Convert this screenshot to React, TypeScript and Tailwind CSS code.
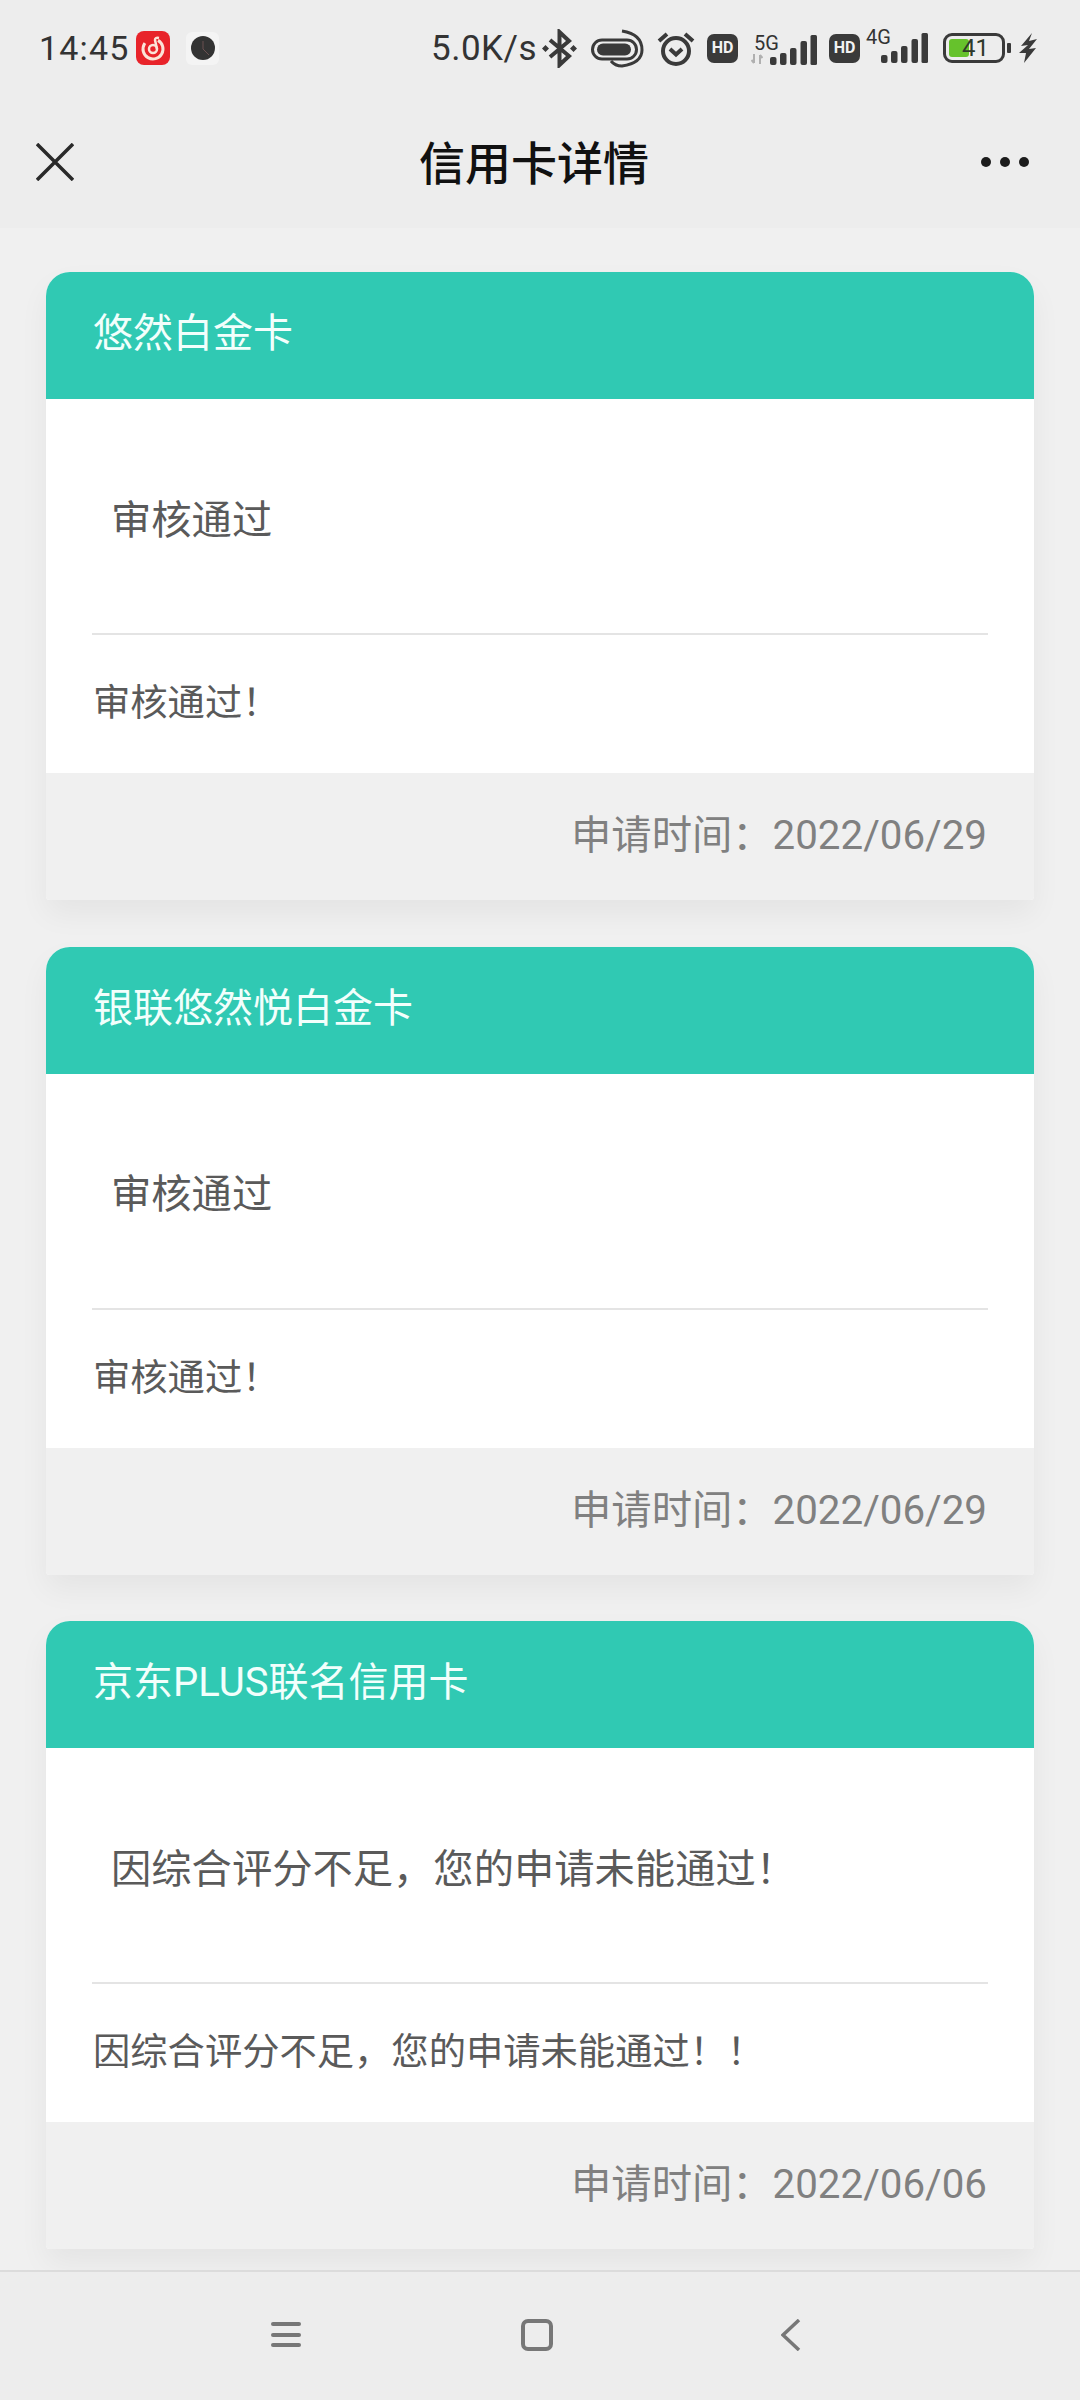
const cjk = { fontFamily: 'Roboto, "Noto Sans CJK SC", sans-serif' };

const applications = [
  { name: "悠然白金卡", status: "审核通过", remark: "审核通过！", date: "2022/06/29" },
  { name: "银联悠然悦白金卡", status: "审核通过", remark: "审核通过！", date: "2022/06/29" },
  {
    name: "京东PLUS联名信用卡",
    status: "因综合评分不足，您的申请未能通过！",
    remark: "因综合评分不足，您的申请未能通过！！",
    date: "2022/06/06",
  },
];

function Signal() {
  return (
    <svg width="47" height="30" viewBox="0 0 47 30" fill="#3a3a3a">
      <rect x="0" y="22" width="6.5" height="8" rx="2" />
      <rect x="10" y="18" width="6.5" height="12" rx="2" />
      <rect x="20" y="13" width="6.5" height="17" rx="2" />
      <rect x="30.5" y="6" width="6.5" height="24" rx="2" />
      <rect x="40.5" y="0" width="6.5" height="30" rx="1.5" />
    </svg>
  );
}

function HdBadge({ className }: { className?: string }) {
  return (
    <div className={`flex h-[29px] w-[31px] items-center justify-center rounded-[7px] bg-[#3a3a3a] text-[16px] font-bold leading-none text-[#f2f2f2] ${className ?? ""}`}>
      HD
    </div>
  );
}

function StatusBar() {
  return (
    <div className="flex h-[96px] items-center justify-between pl-[39px] pr-[43px] text-[#333333]">
      <div className="flex items-center">
        <span className="w-[97px] text-[34px] font-normal leading-none tracking-[1.2px]">14:45</span>
        <svg width="34" height="34" viewBox="0 0 34 34">
          <rect width="34" height="34" rx="8" fill="#e8232a" />
          <circle cx="17" cy="18" r="10" fill="none" stroke="#fbe3d8" strokeWidth="3" strokeDasharray="48 15" transform="rotate(-60 17 18)" />
          <circle cx="17" cy="18" r="4" fill="none" stroke="#fbe3d8" strokeWidth="2.5" />
          <path d="M21 18 L19 9 Q19 6 23 7" fill="none" stroke="#fbe3d8" strokeWidth="2.5" />
        </svg>
        <div className="ml-[16px] flex h-[33px] w-[33px] items-center justify-center rounded-[6px] bg-[#f4f4f4]">
          <svg width="24" height="24" viewBox="0 0 24 24">
            <circle cx="12" cy="12" r="12" fill="#333333" />
            <path d="M12 5 V13 L18 19" fill="none" stroke="#6b5050" strokeWidth="1" />
          </svg>
        </div>
      </div>
      <div className="flex items-center">
        <span className="w-[103px] text-[35px] leading-none tracking-[0.5px]">5.0K/s</span>
        {/* bluetooth */}
        <svg width="35" height="39" viewBox="0 0 35 39" className="ml-[8px]" fill="none" stroke="#3a3a3a" strokeWidth="4">
          <path d="M8 11 L27 27 L17.5 36 V3 L27 12 L8 28" />
          <path d="M3.5 16 L7 19.5 L3.5 23 L0 19.5 Z M31.5 16 L35 19.5 L31.5 23 L28 19.5 Z" fill="#3a3a3a" stroke="none" />
        </svg>
        {/* link boost */}
        <svg width="53" height="39" viewBox="0 0 53 39" className="ml-[14px]" fill="none" stroke="#3a3a3a" strokeWidth="3">
          <rect x="1.5" y="11" width="44" height="19" rx="9.5" />
          <rect x="6" y="14.5" width="34" height="12" rx="6" fill="#3a3a3a" stroke="none" />
          <path d="M31 2 Q51 5 51 21 Q51 34 31 37 Q24 37 20 32" />
        </svg>
        {/* alarm */}
        <svg width="38" height="36" viewBox="0 0 38 36" className="ml-[13px]" fill="none" stroke="#3a3a3a" strokeWidth="4">
          <circle cx="19" cy="21" r="13" />
          <path d="M13 19 L19 24.5 L25 19" />
          <path d="M2 11 L10 4 M36 11 L28 4" />
        </svg>
        <HdBadge className="ml-[12px]" />
        <div className="ml-[13px] flex h-[33px] w-[66px] items-end">
          <div className="flex w-[19px] flex-col pb-[1px]">
            <span className="mb-[3px] ml-[3px] whitespace-nowrap text-[20px] leading-[15px]">5G</span>
            <svg width="12" height="10" viewBox="0 0 12 10" fill="none" stroke="#b0b0b0" strokeWidth="2">
              <path d="M3 0 V9 M0.5 6 L3 9 M9 10 V1 M11.5 4 L9 1" />
            </svg>
          </div>
          <Signal />
        </div>
        <HdBadge className="ml-[12px]" />
        <div className="relative ml-[6px] flex h-[30px] w-[62px] items-end justify-end">
          <span className="absolute left-[0px] top-[-3px] text-[20px] leading-[15px]">4G</span>
          <Signal />
        </div>
        <div className="relative ml-[15px] flex h-[30px] w-[62px] items-center rounded-[9px] border-[3.5px] border-[#3a3a3a] py-[3px] pl-[3px]">
          <div className="h-full w-[20px] rounded-[3px] bg-[#66c22c]" />
          <span className="absolute left-[16px] top-[0px] text-[24px] leading-[24px] text-[#2f3a2a]">41</span>
        </div>
        <div className="ml-[2px] h-[10px] w-[4px] rounded-[1px] bg-[#3a3a3a]" />
        <svg width="18" height="30" viewBox="0 0 18 30" className="ml-[8px]" fill="#3a3a3a">
          <path d="M13 0 L2 13 L9 12 L0 20 L7 20 L5 30 L17 15 L10 16 L18 6 L10 8 Z" />
        </svg>
      </div>
    </div>
  );
}

function NavBar() {
  return (
    <div className="flex h-[132px] items-center justify-between pl-[36px] pr-[51px]">
      <div className="w-[51px]">
        <svg width="38" height="38" viewBox="0 0 38 38" stroke="#2a2a2a" strokeWidth="3.5" fill="none" className="block">
          <path d="M1 1 L37 37 M37 1 L1 37" />
        </svg>
      </div>
      <span className="pt-[3px] text-[46px] font-medium leading-none text-[#111111]">信用卡详情</span>
      <div className="flex gap-[9px]">
        <span className="h-[10px] w-[10px] rounded-full bg-[#1c1c1c]" />
        <span className="h-[10px] w-[10px] rounded-full bg-[#1c1c1c]" />
        <span className="h-[10px] w-[10px] rounded-full bg-[#1c1c1c]" />
      </div>
    </div>
  );
}

function Card({ name, status, remark, date }: (typeof applications)[number]) {
  return (
    <div className="flex h-[628px] w-[988px] shrink-0 flex-col overflow-hidden rounded-t-[24px] rounded-b-[4px] bg-white shadow-[0_14px_30px_rgba(0,0,0,0.05)]">
      <div className="flex h-[127px] items-center bg-[#30c9b3] pb-[3px] pl-[47px] text-[40px] leading-none text-[#f2fffc]">{name}</div>
      <div className="mx-[46px] flex h-[236px] items-center border-b-2 border-[#e4e4e4] pl-[19px] pt-[10px] text-[40.3px] leading-none text-[#5a5a5a]">
        {status}
      </div>
      <div className="flex h-[138px] items-center pl-[47px] text-[37.3px] leading-none text-[#5a5a5a]">{remark}</div>
      <div className="flex h-[127px] items-center justify-end bg-[#f0f0f0] pr-[47px] text-[40.3px] leading-none text-[#808080]">
        申请时间：{date}
      </div>
    </div>
  );
}

function BottomNav() {
  return (
    <div className="flex h-[130px] shrink-0 items-start border-t-2 border-[#dcdcdc] bg-[#ededed] pl-[271px] pt-[47px]">
      <div className="flex h-[31px] w-[30px] flex-col justify-between py-[3px]">
        <span className="h-[4px] rounded-full bg-[#777777]" />
        <span className="h-[4px] rounded-full bg-[#777777]" />
        <span className="h-[4px] rounded-full bg-[#777777]" />
      </div>
      <div className="ml-[220px] h-[32px] w-[32px] rounded-[7px] border-[4px] border-[#777777]" />
      <svg width="20" height="32" viewBox="0 0 20 32" className="ml-[228px]" fill="none" stroke="#777777" strokeWidth="3.5">
        <path d="M18 1 L2 16 L18 31" />
      </svg>
    </div>
  );
}

export default function App() {
  return (
    <div className="flex h-[2400px] w-[1080px] flex-col overflow-hidden bg-[#ededed]" style={cjk}>
      <StatusBar />
      <NavBar />
      <div className="flex min-h-0 flex-1 flex-col gap-[46.5px] overflow-hidden bg-[#f0f0f0] pl-[46px] pt-[44px]">
        {applications.map((a) => (
          <Card key={a.name} {...a} />
        ))}
      </div>
      <BottomNav />
    </div>
  );
}
